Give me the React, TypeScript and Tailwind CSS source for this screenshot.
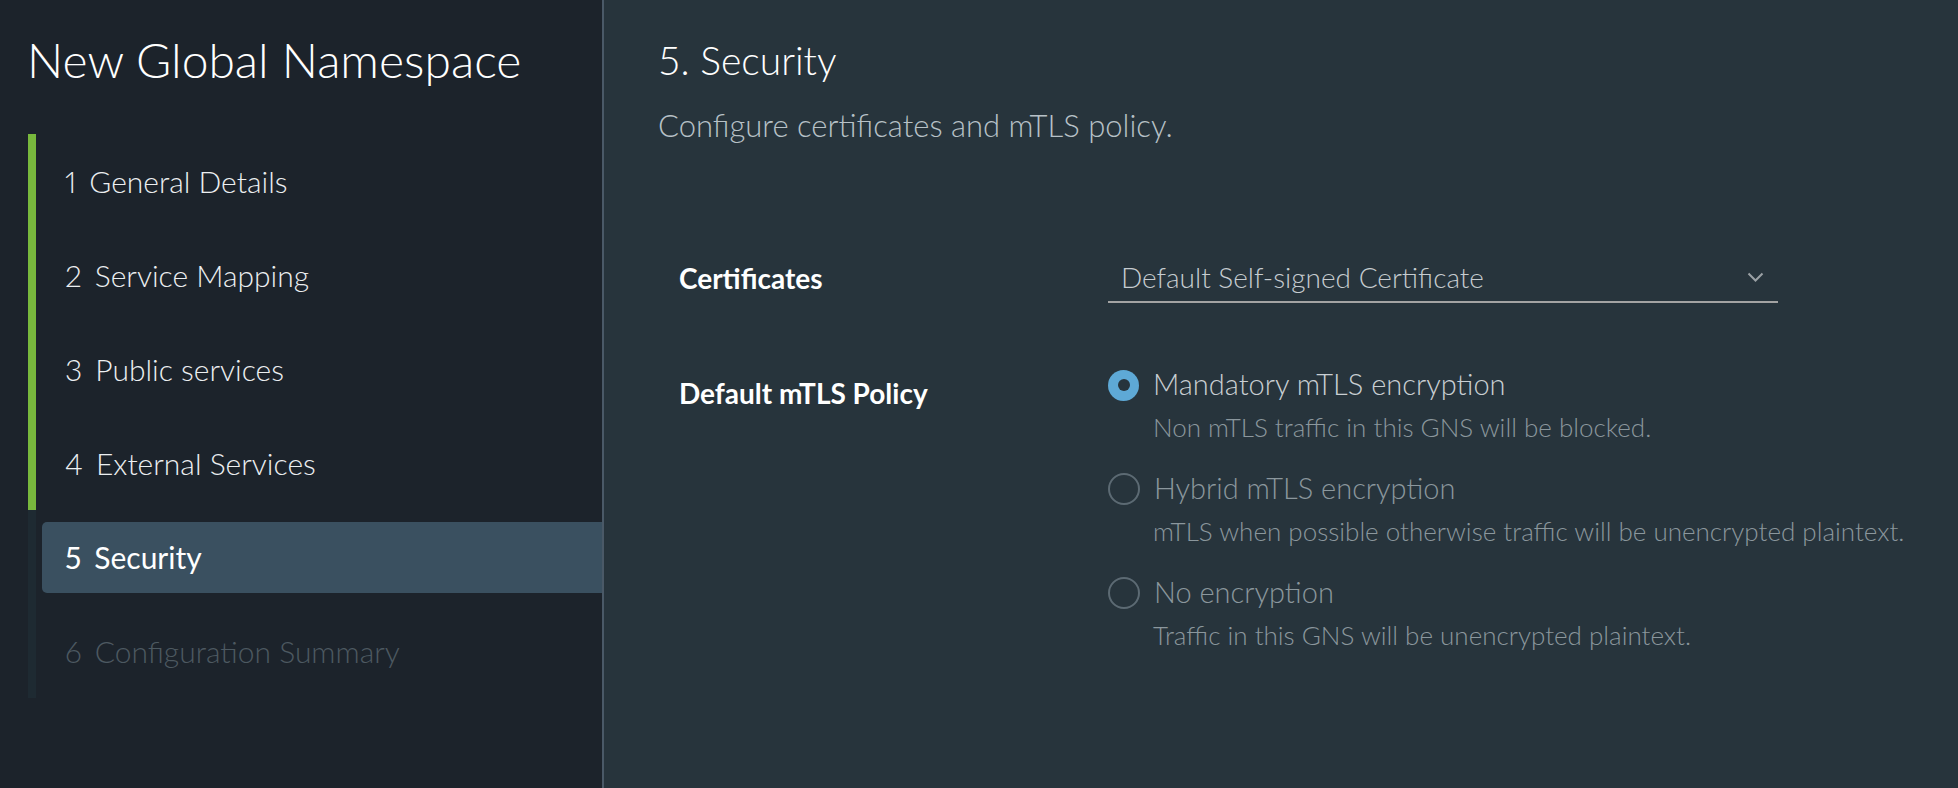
const steps = [
  { n: 1, label: "General Details", state: "done" },
  { n: 2, label: "Service Mapping", state: "done" },
  { n: 3, label: "Public services", state: "done" },
  { n: 4, label: "External Services", state: "done" },
  { n: 5, label: "Security", state: "active" },
  { n: 6, label: "Configuration Summary", state: "todo" },
];

const options = [
  {
    label: "Mandatory mTLS encryption",
    desc: "Non mTLS traffic in this GNS will be blocked.",
    checked: true,
  },
  {
    label: "Hybrid mTLS encryption",
    desc: "mTLS when possible otherwise traffic will be unencrypted plaintext.",
    checked: false,
  },
  {
    label: "No encryption",
    desc: "Traffic in this GNS will be unencrypted plaintext.",
    checked: false,
  },
];

function Sidebar() {
  return (
    <aside className="h-full w-[604px] shrink-0 border-r-2 border-[#4a5967] bg-[#1c232b]">
      <h1 className="pl-[27px] pt-[35px] text-[48px] font-light leading-[50px] text-white">
        New Global Namespace
      </h1>

      <ol className="ml-[28px] mt-[49px] flex flex-col">
        {steps.map((s) => (
          <li key={s.n} className="flex h-[94px]">
            <div
              className={
                s.state === "done"
                  ? "w-[8px] bg-[#78b83d]"
                  : "w-[8px] bg-[#1e2a32]"
              }
            />
            <div className="flex flex-1 items-center pl-[6px]">
              <div
                className={
                  s.state === "active"
                    ? "flex h-[71px] w-full items-center gap-[13px] rounded-l-[5px] bg-[#3a5060] pl-[23px] text-[30px] font-normal text-white"
                    : s.state === "done"
                      ? "flex h-[71px] w-full items-center gap-[13px] pl-[23px] text-[30px] font-light text-[#eceff1]"
                      : "flex h-[71px] w-full items-center gap-[13px] pl-[23px] text-[30px] font-light text-[#4d5961]"
                }
              >
                <span className="proportional-nums">{s.n}</span>
                <span>{s.label}</span>
              </div>
            </div>
          </li>
        ))}
      </ol>
    </aside>
  );
}

function Radio({ checked }: { checked: boolean }) {
  if (checked) {
    return (
      <span className="flex h-[31px] w-[31px] shrink-0 items-center justify-center rounded-full bg-[#5ea9d6]">
        <span className="h-[12px] w-[12px] rounded-full bg-[#27343c]" />
      </span>
    );
  }
  return <span className="h-[32px] w-[32px] shrink-0 rounded-full border-2 border-[#5c6a73]" />;
}

export default function App() {
  return (
    <div
      className="flex h-[788px] w-full overflow-hidden"
      style={{ fontFamily: "Lato, 'Open Sans', sans-serif" }}
    >
      <Sidebar />

      <main className="flex-1 bg-[#27343c] pl-[54px] pt-[40px]">
        <h2 className="text-[39px] font-light leading-[40px] text-white">5. Security</h2>
        <p className="mt-[30px] text-[31px] font-light leading-[30px] text-[#b7c1c7]">
          Configure certificates and mTLS policy.
        </p>

        <div className="mt-[113px] pl-[21px]">
          <div className="flex items-center">
            <div className="w-[429px] text-[28px] font-bold text-white">Certificates</div>
            <div className="flex h-[50px] w-[670px] items-center justify-between border-b-2 border-[#a3a3a3] pl-[13px] pr-[14px]">
              <span className="text-[28px] font-light text-[#c6ccd0]">
                Default Self-signed Certificate
              </span>
              <svg width="17" height="11" viewBox="0 0 17 11" fill="none">
                <polyline
                  points="1.5,1.5 8.5,8.5 15.5,1.5"
                  stroke="#9ba1a5"
                  strokeWidth="2"
                />
              </svg>
            </div>
          </div>

          <div className="mt-[65px] flex">
            <div className="mt-[10px] w-[429px] text-[28px] font-bold leading-[30px] text-white">
              Default mTLS Policy
            </div>
            <div className="flex flex-col gap-[30px]">
              {options.map((o) => (
                <div key={o.label}>
                  <div className="flex h-[34px] items-center gap-[14px]">
                    <Radio checked={o.checked} />
                    <span
                      className={
                        o.checked
                          ? "-mt-[3px] text-[29px] font-light text-[#c9cfd3]"
                          : "-mt-[3px] text-[29px] font-light text-[#8b979d]"
                      }
                    >
                      {o.label}
                    </span>
                  </div>
                  <div className="mt-[10px] pl-[45px] text-[26px] font-light leading-[30px] text-[#8b979d]">
                    {o.desc}
                  </div>
                </div>
              ))}
            </div>
          </div>
        </div>
      </main>
    </div>
  );
}
